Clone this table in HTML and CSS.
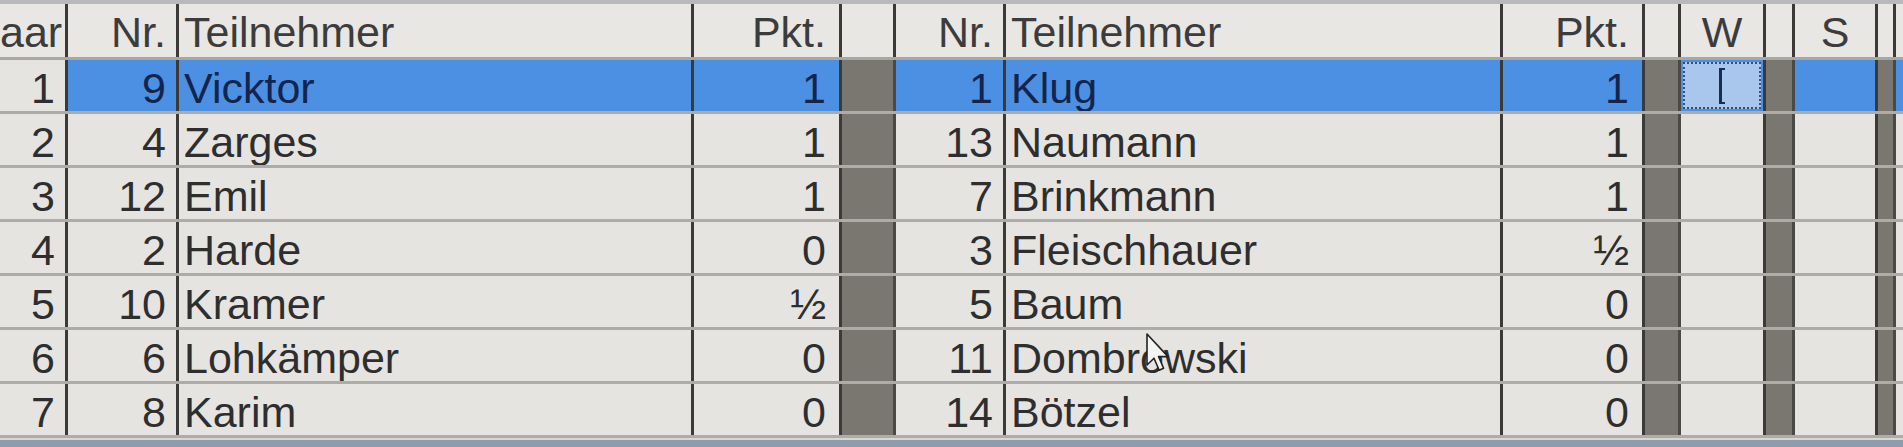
FILE: index.html
```html
<!DOCTYPE html>
<html lang="de">
<head>
<meta charset="utf-8">
<title>Paarungen</title>
<link rel="stylesheet" href="styles.css">
</head>
<body>
<div class="screen">
  <div class="topbar"></div>
  <div class="grid">
    <div class="row head">
      <div class="c r">aar</div>
      <div class="c r">Nr.</div>
      <div class="c l">Teilnehmer</div>
      <div class="c r pk">Pkt.</div>
      <div class="c g0"></div>
      <div class="c r">Nr.</div>
      <div class="c l">Teilnehmer</div>
      <div class="c r pk">Pkt.</div>
      <div class="c g0"></div>
      <div class="c m">W</div>
      <div class="c g0"></div>
      <div class="c m">S</div>
      <div class="c g0"></div>
      <div class="c e"></div>
    </div>
    <div class="row sel">
      <div class="c r">1</div>
      <div class="c r b">9</div>
      <div class="c l b">Vicktor</div>
      <div class="c r b pk">1</div>
      <div class="c g"></div>
      <div class="c r b">1</div>
      <div class="c l b">Klug</div>
      <div class="c r b pk">1</div>
      <div class="c g"></div>
      <div class="c m focus"><span class="edit"><span class="caret"></span></span></div>
      <div class="c g"></div>
      <div class="c m b"></div>
      <div class="c g"></div>
      <div class="c e b"></div>
    </div>
    <div class="row">
      <div class="c r">2</div>
      <div class="c r">4</div>
      <div class="c l">Zarges</div>
      <div class="c r pk">1</div>
      <div class="c g"></div>
      <div class="c r">13</div>
      <div class="c l">Naumann</div>
      <div class="c r pk">1</div>
      <div class="c g"></div>
      <div class="c m"></div>
      <div class="c g"></div>
      <div class="c m"></div>
      <div class="c g"></div>
      <div class="c e"></div>
    </div>
    <div class="row">
      <div class="c r">3</div>
      <div class="c r">12</div>
      <div class="c l">Emil</div>
      <div class="c r pk">1</div>
      <div class="c g"></div>
      <div class="c r">7</div>
      <div class="c l">Brinkmann</div>
      <div class="c r pk">1</div>
      <div class="c g"></div>
      <div class="c m"></div>
      <div class="c g"></div>
      <div class="c m"></div>
      <div class="c g"></div>
      <div class="c e"></div>
    </div>
    <div class="row">
      <div class="c r">4</div>
      <div class="c r">2</div>
      <div class="c l">Harde</div>
      <div class="c r pk">0</div>
      <div class="c g"></div>
      <div class="c r">3</div>
      <div class="c l">Fleischhauer</div>
      <div class="c r pk">½</div>
      <div class="c g"></div>
      <div class="c m"></div>
      <div class="c g"></div>
      <div class="c m"></div>
      <div class="c g"></div>
      <div class="c e"></div>
    </div>
    <div class="row">
      <div class="c r">5</div>
      <div class="c r">10</div>
      <div class="c l">Kramer</div>
      <div class="c r pk">½</div>
      <div class="c g"></div>
      <div class="c r">5</div>
      <div class="c l">Baum</div>
      <div class="c r pk">0</div>
      <div class="c g"></div>
      <div class="c m"></div>
      <div class="c g"></div>
      <div class="c m"></div>
      <div class="c g"></div>
      <div class="c e"></div>
    </div>
    <div class="row">
      <div class="c r">6</div>
      <div class="c r">6</div>
      <div class="c l">Lohkämper</div>
      <div class="c r pk">0</div>
      <div class="c g"></div>
      <div class="c r">11</div>
      <div class="c l">Dombrowski</div>
      <div class="c r pk">0</div>
      <div class="c g"></div>
      <div class="c m"></div>
      <div class="c g"></div>
      <div class="c m"></div>
      <div class="c g"></div>
      <div class="c e"></div>
    </div>
    <div class="row">
      <div class="c r">7</div>
      <div class="c r">8</div>
      <div class="c l">Karim</div>
      <div class="c r pk">0</div>
      <div class="c g"></div>
      <div class="c r">14</div>
      <div class="c l">Bötzel</div>
      <div class="c r pk">0</div>
      <div class="c g"></div>
      <div class="c m"></div>
      <div class="c g"></div>
      <div class="c m"></div>
      <div class="c g"></div>
      <div class="c e"></div>
    </div>
  </div>
  <div class="bottombar"></div>
  <svg class="cursor" width="26" height="40" viewBox="0 0 13 20" aria-hidden="true">
    <path d="M0.5 0.5 L0.5 16 L4 12.6 L6.6 18.6 L8.8 17.6 L6.3 11.8 L11 11.8 Z" fill="#f4f4f2" stroke="#222" stroke-width="0.8" stroke-linejoin="round"/>
  </svg>
</div>
</body>
</html>
```

FILE: styles.css
```css
html, body {
  margin: 0;
  padding: 0;
  background: #e4e2de;
}

.screen {
  position: relative;
  width: 1903px;
  height: 447px;
  overflow: hidden;
  font-family: "Liberation Sans", Arial, sans-serif;
  font-size: 43px;
  color: #2e2e2e;
  background: #e4e2de;
}

.topbar {
  height: 4px;
  background: #b7b9bb;
}

.grid {
  display: flex;
  flex-direction: column;
}

.row {
  display: grid;
  grid-template-columns: 68px 111px 515px 148px 54px 110px 497px 142px 36px 85px 29px 83px 18px 7px;
  height: 54px;
  box-sizing: border-box;
  border-bottom: 3px solid #aeaca7;
  background: #e6e4e0;
}

.row.head {
  height: 56px;
  background: #e9e7e3;
  color: #3c3c3c;
  border-bottom-color: #a9a7a2;
}

.c {
  box-sizing: border-box;
  border-right: 3px solid #3b3a38;
  line-height: 51px;
  padding-top: 3px;
  white-space: nowrap;
  overflow: hidden;
}

.head .c {
  line-height: 50px;
}

.c.r {
  text-align: right;
  padding-right: 10px;
}

.c.pk {
  padding-right: 13px;
}

.c.l {
  text-align: left;
  padding-left: 5px;
}

.c.m {
  text-align: center;
}

.c.e {
  border-right: none;
}

.c.g {
  background: #797770;
  border-right-color: #4a4946;
}

.c.b {
  background: #4b90e2;
  color: #14244a;
}

.c.focus {
  background: #4b90e2;
  display: flex;
  padding: 2px;
}

.edit {
  flex: 1;
  display: flex;
  align-items: center;
  justify-content: center;
  background: #a9c7ec;
  border: 2px dotted #33507a;
}

.caret {
  width: 6px;
  height: 36px;
  box-sizing: border-box;
  border-left: 3px solid #1c2c4c;
  border-top: 2px solid #1c2c4c;
  border-bottom: 2px solid #1c2c4c;
}

.bottombar {
  height: 9px;
  border-top: 2px solid #d4d6d8;
  background: #8f9cab;
}

.cursor {
  position: absolute;
  left: 1146px;
  top: 333px;
}
```
